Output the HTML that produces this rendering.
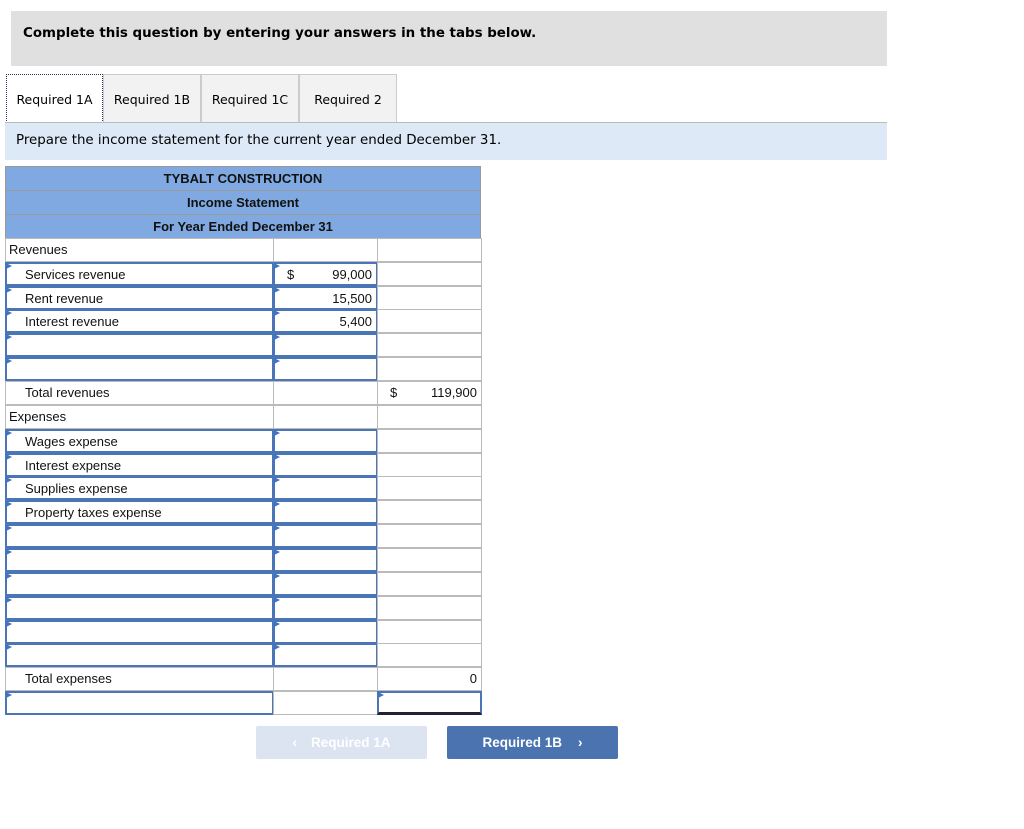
<!DOCTYPE html>
<html><head><meta charset="utf-8"><style>
body{margin:0;background:#fff;width:1024px;height:829px;position:relative;overflow:hidden;font-family:"Liberation Sans",Arial,sans-serif}
.a{position:absolute;box-sizing:border-box}
.hd{left:11px;top:11px;width:876px;height:55px;background:#e0e0e0;font-family:"DejaVu Sans",Verdana,sans-serif;font-weight:bold;font-size:13.4px;padding:15px 0 0 12px}
.tab{top:74px;height:49px;background:#f2f2f2;border:1px solid #ccc;border-bottom:none;font-family:"DejaVu Sans",Verdana,sans-serif;font-size:12.5px;text-align:center;line-height:49px}
.ins{left:5px;top:122px;width:882px;height:38px;background:#dde9f6;border-top:1px solid #bbb;font-family:"DejaVu Sans",Verdana,sans-serif;font-size:13.4px;padding:10px 0 0 11px}
.h{left:5px;width:476px;background:#7fa9e0;border:1px solid #999;font-weight:bold;font-size:13px;text-align:center;color:#111}
.c{height:24px;border:1px solid #bbb;font-size:13px;line-height:22px;color:#111;background:#fff}
.i{border:2px solid #4a76b8}
.i:before{content:"";position:absolute;left:-1px;top:-1px;border-left:6px solid #3f73c4;border-top:3.5px solid transparent;border-bottom:3.5px solid transparent}
.r{text-align:right;padding-right:4px}
.btn{top:726px;height:33px;width:171px;border-radius:2px;font-weight:bold;font-size:13.5px;text-align:center;line-height:33px;color:#fff}
</style></head><body>
<div class="a hd">Complete this question by entering your answers in the tabs below.</div>
<div class="a tab" style="left:6px;width:97px;background:#fff;border:1px dotted #335">Required 1A</div>
<div class="a tab" style="left:103px;width:98px">Required 1B</div>
<div class="a tab" style="left:201px;width:98px">Required 1C</div>
<div class="a tab" style="left:299px;width:98px">Required 2</div>
<div class="a ins">Prepare the income statement for the current year ended December 31.</div>
<div class="a h" style="top:166px;height:25px;line-height:24px">TYBALT CONSTRUCTION</div>
<div class="a h" style="top:190px;height:25px;line-height:24px">Income Statement</div>
<div class="a h" style="top:214px;height:25px;line-height:23px">For Year Ended December 31</div>

<div class="a c" style="left:5px;top:238px;width:269px;padding-left:3px">Revenues</div><div class="a c" style="left:273px;top:238px;width:105px"></div><div class="a c" style="left:377px;top:238px;width:105px"></div>

<div class="a c i" style="left:5px;top:262px;width:269px;padding-left:18px">Services revenue</div><div class="a c i r" style="left:273px;top:262px;width:105px"><span style="float:left;padding-left:12px">$</span>99,000</div><div class="a c" style="left:377px;top:262px;width:105px"></div>
<div class="a c i" style="left:5px;top:286px;width:269px;padding-left:18px">Rent revenue</div><div class="a c i r" style="left:273px;top:286px;width:105px">15,500</div><div class="a c" style="left:377px;top:286px;width:105px"></div>
<div class="a c i" style="left:5px;top:309px;width:269px;padding-left:18px">Interest revenue</div><div class="a c i r" style="left:273px;top:309px;width:105px">5,400</div><div class="a c" style="left:377px;top:309px;width:105px"></div>
<div class="a c i" style="left:5px;top:333px;width:269px"></div><div class="a c i" style="left:273px;top:333px;width:105px"></div><div class="a c" style="left:377px;top:333px;width:105px"></div>
<div class="a c i" style="left:5px;top:357px;width:269px"></div><div class="a c i" style="left:273px;top:357px;width:105px"></div><div class="a c" style="left:377px;top:357px;width:105px"></div>
<div class="a c" style="left:5px;top:381px;width:269px;padding-left:19px">Total revenues</div><div class="a c" style="left:273px;top:381px;width:105px"></div><div class="a c r" style="left:377px;top:381px;width:105px"><span style="float:left;padding-left:12px">$</span>119,900</div>
<div class="a c" style="left:5px;top:405px;width:269px;padding-left:3px">Expenses</div><div class="a c" style="left:273px;top:405px;width:105px"></div><div class="a c" style="left:377px;top:405px;width:105px"></div>
<div class="a c i" style="left:5px;top:429px;width:269px;padding-left:18px">Wages expense</div><div class="a c i" style="left:273px;top:429px;width:105px"></div><div class="a c" style="left:377px;top:429px;width:105px"></div>
<div class="a c i" style="left:5px;top:453px;width:269px;padding-left:18px">Interest expense</div><div class="a c i" style="left:273px;top:453px;width:105px"></div><div class="a c" style="left:377px;top:453px;width:105px"></div>
<div class="a c i" style="left:5px;top:476px;width:269px;padding-left:18px">Supplies expense</div><div class="a c i" style="left:273px;top:476px;width:105px"></div><div class="a c" style="left:377px;top:476px;width:105px"></div>
<div class="a c i" style="left:5px;top:500px;width:269px;padding-left:18px">Property taxes expense</div><div class="a c i" style="left:273px;top:500px;width:105px"></div><div class="a c" style="left:377px;top:500px;width:105px"></div>
<div class="a c i" style="left:5px;top:524px;width:269px"></div><div class="a c i" style="left:273px;top:524px;width:105px"></div><div class="a c" style="left:377px;top:524px;width:105px"></div>
<div class="a c i" style="left:5px;top:548px;width:269px"></div><div class="a c i" style="left:273px;top:548px;width:105px"></div><div class="a c" style="left:377px;top:548px;width:105px"></div>
<div class="a c i" style="left:5px;top:572px;width:269px"></div><div class="a c i" style="left:273px;top:572px;width:105px"></div><div class="a c" style="left:377px;top:572px;width:105px"></div>
<div class="a c i" style="left:5px;top:596px;width:269px"></div><div class="a c i" style="left:273px;top:596px;width:105px"></div><div class="a c" style="left:377px;top:596px;width:105px"></div>
<div class="a c i" style="left:5px;top:620px;width:269px"></div><div class="a c i" style="left:273px;top:620px;width:105px"></div><div class="a c" style="left:377px;top:620px;width:105px"></div>
<div class="a c i" style="left:5px;top:643px;width:269px"></div><div class="a c i" style="left:273px;top:643px;width:105px"></div><div class="a c" style="left:377px;top:643px;width:105px"></div>
<div class="a c" style="left:5px;top:667px;width:269px;padding-left:19px">Total expenses</div><div class="a c" style="left:273px;top:667px;width:105px"></div><div class="a c r" style="left:377px;top:667px;width:105px">0</div>
<div class="a c i" style="left:5px;top:691px;width:269px"></div><div class="a c" style="left:273px;top:691px;width:105px"></div><div class="a c i" style="left:377px;top:691px;width:105px;border-bottom:3px solid #223"></div>

<div class="a btn" style="left:256px;background:#dbe4f0"><span style="margin-right:14px">&lsaquo;</span>Required 1A</div>
<div class="a btn" style="left:447px;background:#4a73b0">Required 1B<span style="margin-left:16px">&rsaquo;</span></div>
</body></html>
